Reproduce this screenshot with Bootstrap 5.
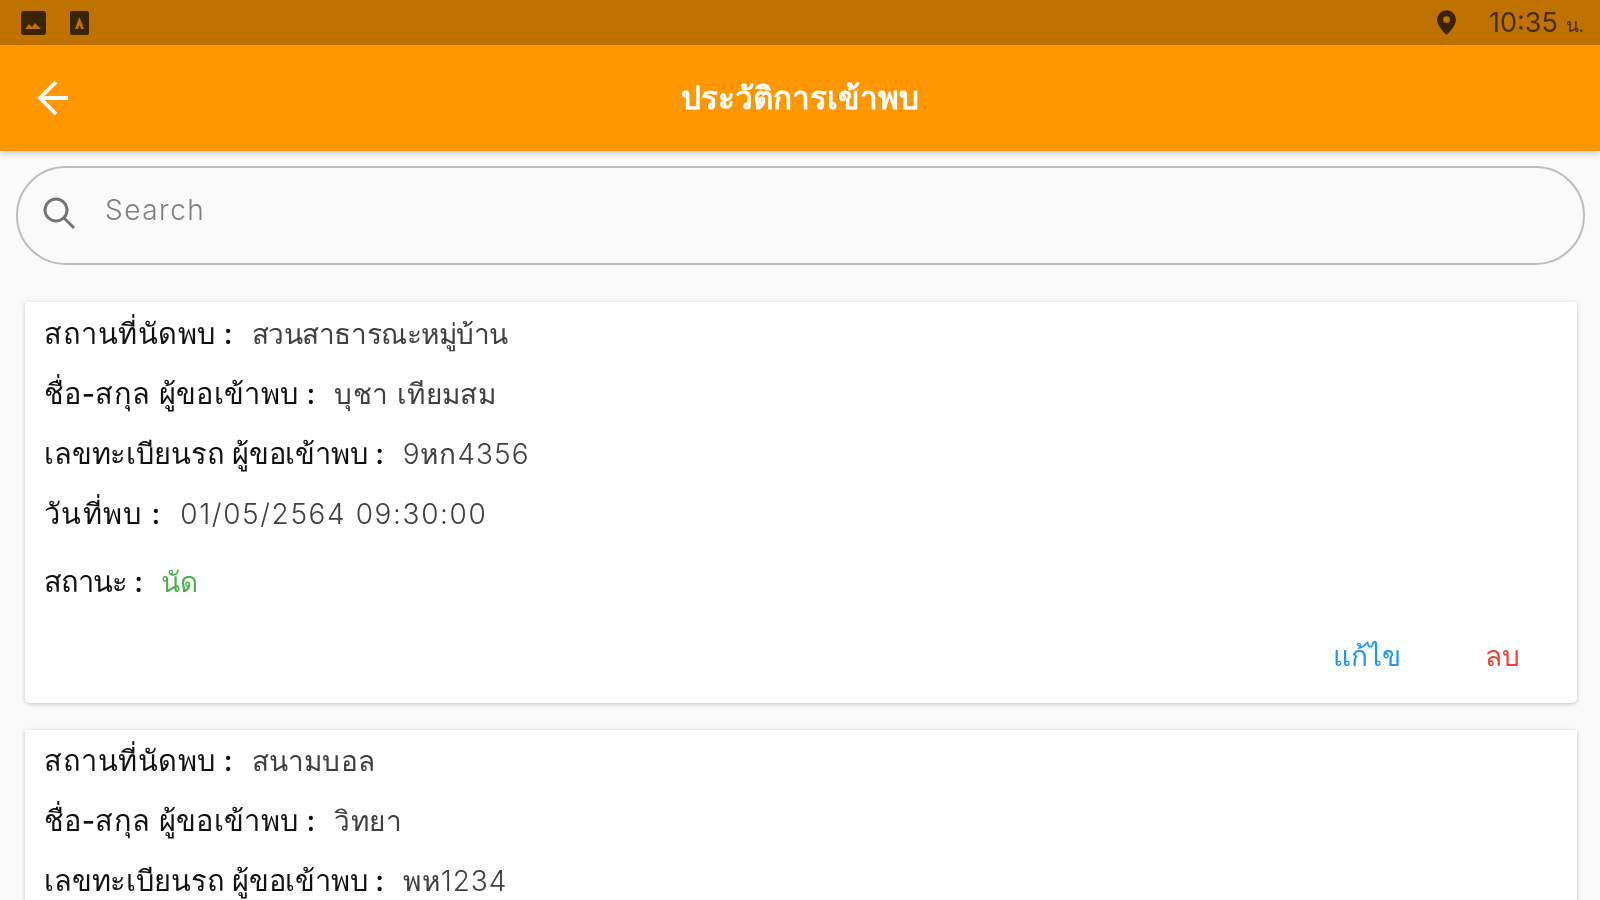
<!DOCTYPE html>
<html lang="th">
<head>
<meta charset="utf-8">
<title>ประวัติการเข้าพบ</title>
<link href="https://cdn.jsdelivr.net/npm/bootstrap@5.3.0/dist/css/bootstrap.min.css" rel="stylesheet">
<style>
html,body{height:100%;overflow:hidden}
body{background:#fafafa;font-family:Inter,"Noto Sans","DejaVu Sans","Liberation Sans",sans-serif;color:#212121}
.status-strip{height:45px;background:#bf7200;padding:0 16px 0 21px;color:#3a2400}
.st-time{font-size:27px;line-height:1;color:#4a2e00;font-weight:400;margin-left:33px;filter:blur(.5px)}
.st-time small{font-size:19px}
.app-strip{height:106px;background:#ff9800;padding-left:37px;box-shadow:0 3px 6px rgba(0,0,0,.18)}
.app-title{font-size:31.5px;font-weight:600;color:#fff;line-height:1;filter:blur(.5px)}
.back-slot{width:35px}
.back-end{width:72px}
.search-shell{height:99px;margin:15px 15px 0 16px;border:2px solid #bdbdbd;border-radius:50px;padding:0 0 8px 23px;gap:28px}
.search-hint{font-size:28px;color:#7f7f7f;line-height:1;margin-top:-4px;letter-spacing:1.5px;font-weight:300;filter:blur(.5px)}
.visit-list{padding:37px 23px 0 25px;gap:27px}
.visit-card{border:0;border-radius:0 0 5px 5px;box-shadow:0 1px 4px rgba(0,0,0,.22);padding:12px 20px 0 19px;height:401px;background:#fff}
.visit-card.next-card{padding-top:11px}
.visit-row{font-size:29px;line-height:40px;height:40px;margin-bottom:20px;white-space:nowrap;filter:blur(.5px)}
.visit-row.gap-top{margin-top:8px;margin-bottom:0}
.visit-row b{font-weight:500;color:#111;letter-spacing:.2px}
.visit-row span{color:#404040;margin-left:10.5px;font-size:28px;font-weight:300}
.visit-row b.lab-place{letter-spacing:.5px}
.visit-row b.lab-name{letter-spacing:.35px}
.visit-row b.lab-plate{letter-spacing:-.15px}
.visit-row b.lab-date{letter-spacing:1.3px}
.visit-row b.lab-state{letter-spacing:-.9px}
.visit-row .val-place{letter-spacing:-.45px}
.visit-row .val-name{letter-spacing:.4px}
.visit-row .val-plate{letter-spacing:1px}
.visit-row .val-date{letter-spacing:1.6px}
.visit-row .val-ground{letter-spacing:.2px}
.visit-row .val-guest{letter-spacing:.5px}
.visit-row .state-ok{color:#4caf50}
.act-row{gap:84px;padding-right:37px;margin-top:34px;font-size:28px;line-height:40px;filter:blur(.5px)}
.act-edit{color:#2196f3}
.act-del{color:#f44336}
</style>
</head>
<body>
<header class="status-strip d-flex align-items-center justify-content-between">
  <div class="d-flex align-items-center gap-4">
    <svg width="25" height="25" viewBox="0 0 25 25"><rect x="0" y="1" width="25" height="24" rx="3" fill="#3a2400"/><path d="M4 19l4-5 3 3 3-4 6 6z" fill="#bf7200"/></svg>
    <svg width="19" height="24" viewBox="0 0 19 24"><rect width="19" height="24" rx="2" fill="#3a2400"/><path d="M5 18l4.500-12 4.500 12h-3l-1.500-4-1.500 4z" fill="#bf7200"/></svg>
  </div>
  <div class="d-flex align-items-center">
    <svg width="19" height="25" viewBox="0 0 20 26"><path d="M10 0a10 10 0 0 0-10 10c0 7 10 16 10 16s10-9 10-16a10 10 0 0 0-10-10z" fill="#3a2400"/><circle cx="10" cy="10" r="3.500" fill="#bf7200"/></svg>
    <div class="st-time">10:35 <small>น.</small></div>
  </div>
</header>
<nav class="app-strip d-flex align-items-center">
  <div class="back-slot d-flex">
    <svg width="32" height="36" viewBox="0 0 32 36" fill="none" stroke="#fff" stroke-width="3.800"><path d="M31 18H4M19 2L3 18l16 16"/></svg>
  </div>
  <div class="app-title flex-grow-1 text-center">ประวัติการเข้าพบ</div>
  <div class="back-end"></div>
</nav>
<main>
  <div class="search-shell d-flex align-items-center">
    <svg width="36" height="36" viewBox="0 0 36 36" fill="none" stroke="#757575" stroke-width="3"><circle cx="15" cy="16" r="11"/><path d="M23 24l10 10"/></svg>
    <div class="search-hint">Search</div>
  </div>
  <div class="visit-list d-flex flex-column">
    <article class="card visit-card">
      <div class="visit-row"><b class="lab-place">สถานที่นัดพบ :</b> <span class="val-place">สวนสาธารณะหมู่บ้าน</span></div>
      <div class="visit-row"><b class="lab-name">ชื่อ-สกุล ผู้ขอเข้าพบ :</b> <span class="val-name">บุชา เทียมสม</span></div>
      <div class="visit-row"><b class="lab-plate">เลขทะเบียนรถ ผู้ขอเข้าพบ :</b> <span class="val-plate">9หก4356</span></div>
      <div class="visit-row"><b class="lab-date">วันที่พบ :</b> <span class="val-date">01/05/2564 09:30:00</span></div>
      <div class="visit-row gap-top"><b class="lab-state">สถานะ :</b> <span class="state-ok">นัด</span></div>
      <div class="act-row d-flex justify-content-end"><div class="act-edit">แก้ไข</div><div class="act-del">ลบ</div></div>
    </article>
    <article class="card visit-card next-card">
      <div class="visit-row"><b class="lab-place">สถานที่นัดพบ :</b> <span class="val-ground">สนามบอล</span></div>
      <div class="visit-row"><b class="lab-name">ชื่อ-สกุล ผู้ขอเข้าพบ :</b> <span class="val-guest">วิทยา</span></div>
      <div class="visit-row"><b class="lab-plate">เลขทะเบียนรถ ผู้ขอเข้าพบ :</b> <span class="val-plate">พห1234</span></div>
    </article>
  </div>
</main>
<script src="https://cdn.jsdelivr.net/npm/bootstrap@5.3.0/dist/js/bootstrap.bundle.min.js"></script>
</body>
</html>
